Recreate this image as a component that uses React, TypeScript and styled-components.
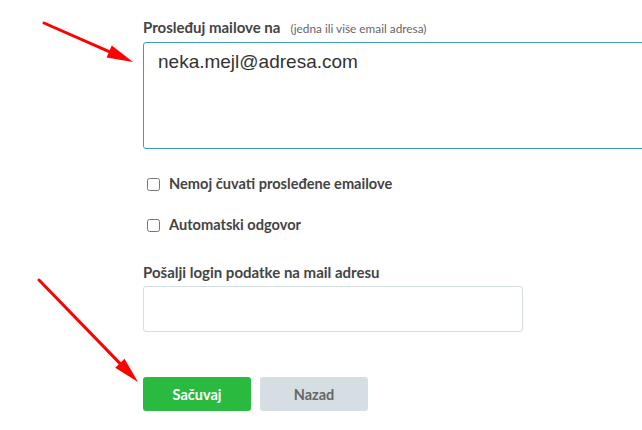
import React, { useState } from 'react';
import styled, { createGlobalStyle } from 'styled-components';

const GlobalStyle = createGlobalStyle`
  html, body {
    margin: 0;
    padding: 0;
    background: #ffffff;
    overflow: hidden;
  }
  * {
    box-sizing: border-box;
  }
`;

const Page = styled.main`
  position: relative;
  width: 642px;
  height: 430px;
  overflow: hidden;
  font-family: 'Lato', 'Open Sans', sans-serif;
  color: #444;
`;

const Form = styled.form`
  display: flex;
  flex-direction: column;
  padding: 18px 0 0 143px;
`;

const Label = styled.label<{ $top?: number; $bottom?: number }>`
  display: flex;
  align-items: baseline;
  gap: 10px;
  font-size: 15px;
  font-weight: 700;
  line-height: 18px;
  color: #444;
  margin-top: ${(p) => p.$top ?? 0}px;
  margin-bottom: ${(p) => p.$bottom ?? 4}px;
`;

const Hint = styled.span`
  font-size: 11.8px;
  font-weight: 400;
  color: #666;
`;

const TextArea = styled.textarea`
  width: 520px;
  height: 107px;
  padding: 8px 14px;
  border: 1px solid #3a9ac9;
  border-radius: 3px;
  font-family: 'Liberation Sans', Arial, sans-serif;
  font-size: 19px;
  color: #333;
  resize: none;
  outline: none;
`;

const CheckRow = styled.label<{ $top: number }>`
  display: flex;
  align-items: center;
  gap: 9px;
  margin-top: ${(p) => p.$top}px;
  font-size: 14.6px;
  font-weight: 700;
  line-height: 18px;
  color: #444;

  input {
    margin: 0 0 0 4px;
    width: 13px;
    height: 13px;
  }
`;

const Input = styled.input`
  width: 380px;
  height: 46px;
  border: 1px solid #d4dde0;
  border-radius: 3px;
  padding: 0 12px;
  font-size: 14px;
  outline: none;
`;

const Buttons = styled.div`
  display: flex;
  gap: 9px;
  margin-top: 45px;
`;

const Button = styled.button<{ $primary?: boolean }>`
  width: 108px;
  height: 34px;
  border: none;
  border-radius: 3px;
  font-family: 'Lato', 'Open Sans', sans-serif;
  font-size: 14.5px;
  font-weight: 700;
  cursor: pointer;
  background: ${(p) => (p.$primary ? '#2bba40' : '#d5dee2')};
  color: ${(p) => (p.$primary ? '#ffffff' : '#666666')};
`;

const Arrows = styled.svg`
  position: absolute;
  left: 0;
  top: 0;
  pointer-events: none;
`;

const Arrow = ({ x1, y1, x2, y2 }: { x1: number; y1: number; x2: number; y2: number }) => {
  const ang = Math.atan2(y2 - y1, x2 - x1);
  const len = 26;
  const w = 6.5;
  const bx = x2 - len * Math.cos(ang);
  const by = y2 - len * Math.sin(ang);
  const px = -Math.sin(ang) * w;
  const py = Math.cos(ang) * w;
  return (
    <g>
      <line x1={x1} y1={y1} x2={bx} y2={by} stroke="#ff0000" strokeWidth={3} strokeLinecap="round" />
      <polygon points={`${x2},${y2} ${bx + px},${by + py} ${bx - px},${by - py}`} fill="#ff0000" />
    </g>
  );
};

const App = () => {
  const [emails, setEmails] = useState('neka.mejl@adresa.com');
  const [keep, setKeep] = useState(false);
  const [auto, setAuto] = useState(false);
  const [login, setLogin] = useState('');

  return (
    <Page>
      <GlobalStyle />
      <Form onSubmit={(e) => e.preventDefault()}>
        <Label>
          Prosleđuj mailove na <Hint>(jedna ili više email adresa)</Hint>
        </Label>
        <TextArea value={emails} onChange={(e) => setEmails(e.target.value)} />

        <CheckRow $top={26}>
          <input type="checkbox" checked={keep} onChange={(e) => setKeep(e.target.checked)} />
          Nemoj čuvati prosleđene emailove
        </CheckRow>
        <CheckRow $top={23}>
          <input type="checkbox" checked={auto} onChange={(e) => setAuto(e.target.checked)} />
          Automatski odgovor
        </CheckRow>

        <Label $top={29} $bottom={5}>Pošalji login podatke na mail adresu</Label>
        <Input value={login} onChange={(e) => setLogin(e.target.value)} />

        <Buttons>
          <Button type="submit" $primary>Sačuvaj</Button>
          <Button type="button">Nazad</Button>
        </Buttons>
      </Form>

      <Arrows width={642} height={430}>
        <Arrow x1={44} y1={23} x2={133} y2={62} />
        <Arrow x1={39} y1={280} x2={138} y2={382} />
      </Arrows>
    </Page>
  );
};

export default App;
